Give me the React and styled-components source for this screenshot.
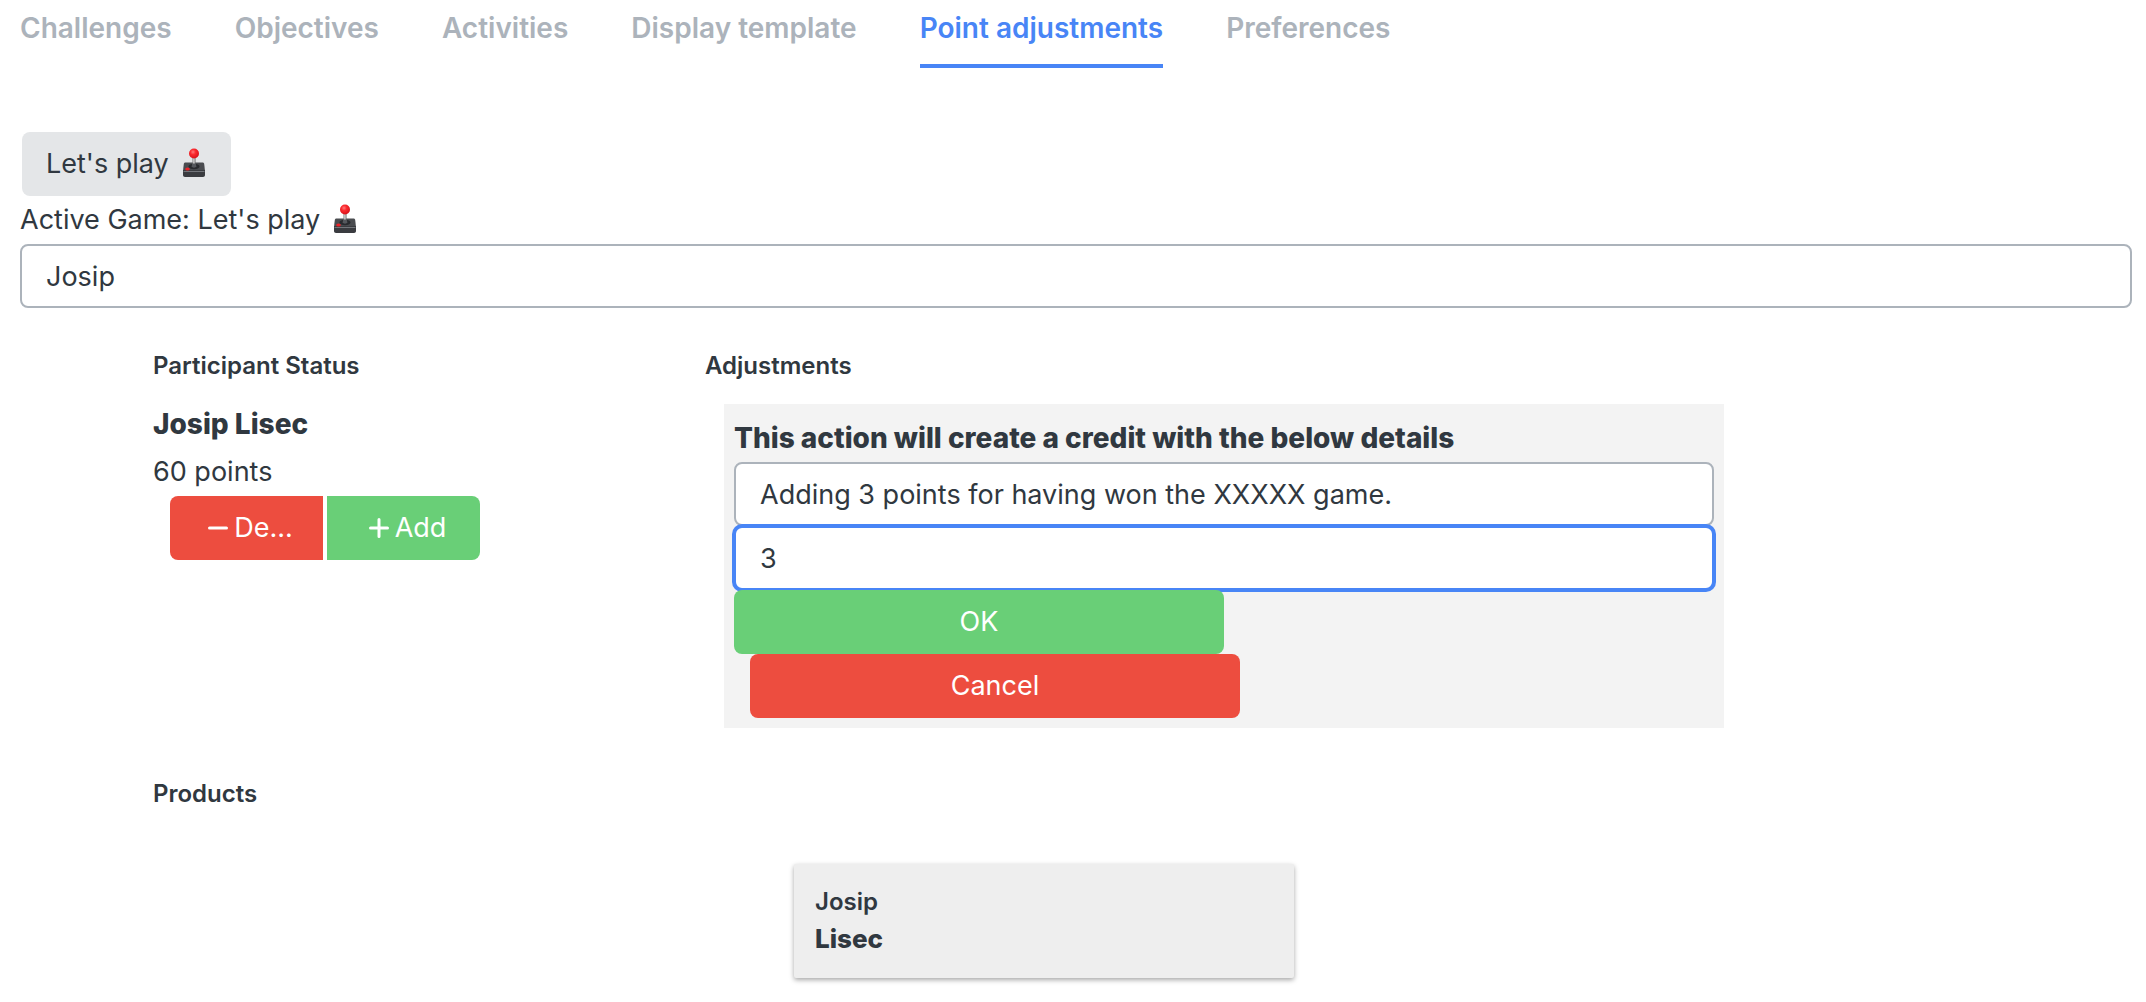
import { useState } from 'react';
import styled, { createGlobalStyle } from 'styled-components';

const GlobalStyle = createGlobalStyle`
  * {
    box-sizing: border-box;
  }
  body {
    margin: 0;
    background: #fff;
    color: #303840;
    font-family: Inter, 'Liberation Sans', sans-serif;
    font-size: 27px;
    line-height: 48px;
  }
  h2, h3, p {
    margin: 0;
  }
`;

const Page = styled.main`
  padding: 0 14px 24px 20px;
`;

const TabList = styled.nav`
  display: flex;
  gap: 63px;
  height: 68px;
  margin-bottom: 64px;
`;

const Tab = styled.a`
  padding-top: 4px;
  border-bottom: 4px solid ${({ $active }) => ($active ? '#4885f6' : 'transparent')};
  color: ${({ $active }) => ($active ? '#4885f6' : '#acb3bb')};
  font-size: 28px;
  font-weight: 600;
  text-decoration: none;
`;

const Button = styled.button`
  display: flex;
  justify-content: center;
  align-items: center;
  gap: 6px;
  height: 64px;
  padding: 0 24px;
  border: 0;
  border-radius: 8px;
  background: ${({ $color }) => $color};
  color: #fff;
  font: inherit;
  cursor: pointer;
`;

const GameButton = styled(Button)`
  gap: 12px;
  margin-left: 2px;
  color: inherit;
`;

const ActiveGame = styled.p`
  display: flex;
  align-items: center;
  gap: 12px;
`;

const Joystick = styled.svg`
  width: 26px;
  height: 30px;
  margin-bottom: 2px;
`;

const Field = styled.input`
  display: block;
  width: 100%;
  height: 64px;
  padding: 0 24px;
  border: 2px solid ${({ $focused }) => ($focused ? '#4885f6' : '#acb3bb')};
  border-radius: 8px;
  outline: none;
  box-shadow: ${({ $focused }) => ($focused ? '0 0 0 2px #4885f6' : 'none')};
  background: #fff;
  color: inherit;
  font: inherit;
`;

const Details = styled.div`
  display: grid;
  grid-template-columns: 3fr 7fr;
  margin: 34px 139px 0 133px;
`;

const SectionTitle = styled.h2`
  margin-bottom: 10px;
  font-size: 24px;
  font-weight: 600;
`;

const Name = styled.h3`
  font-size: 28px;
  font-weight: 800;
`;

const ButtonGroup = styled.div`
  display: flex;
  gap: 4px;
  width: 310px;
  margin-left: 17px;
  button {
    flex: 1;
    padding: 0 20px 0 28px;
  }
  button:first-child {
    border-radius: 8px 0 0 8px;
  }
  button:last-child {
    border-radius: 0 8px 8px 0;
  }
`;

const Sign = styled.svg`
  width: 20px;
  height: 20px;
  fill: none;
  stroke: currentColor;
  stroke-width: 3;
  stroke-linecap: round;
`;

const CreditPanel = styled.form`
  max-width: 1000px;
  margin: 14px 0 0 19px;
  padding: 10px;
  background: #f3f3f3;
`;

const WideButton = styled(Button)`
  position: relative;
  width: 50%;
`;

const CancelButton = styled(WideButton)`
  margin-left: 16px;
`;

const Products = styled.section`
  margin: 42px 139px 0 133px;
`;

const ProductCard = styled.div`
  width: 500px;
  margin: 46px 0 0 641px;
  padding: 19px 21px 21px;
  border-radius: 2px;
  background: #eee;
  box-shadow: 0 2px 5px rgba(0, 0, 0, 0.35);
  line-height: 37px;
`;

const FirstName = styled.p`
  font-size: 24px;
  font-weight: 600;
`;

const LastName = styled.p`
  font-size: 26px;
  font-weight: 800;
`;

const GREEN = '#69cf77';
const RED = '#ed4d3f';

const tabs = ['Challenges', 'Objectives', 'Activities', 'Display template', 'Point adjustments', 'Preferences'];

const JoystickIcon = () => (
  <Joystick viewBox='0 0 26 30' aria-hidden='true'>
    <defs>
      <radialGradient id='ball' cx='0.4' cy='0.35' r='0.65'>
        <stop offset='0' stopColor='#ff7a7a' />
        <stop offset='0.4' stopColor='#fb2b2f' />
        <stop offset='1' stopColor='#d9131b' />
      </radialGradient>
      <linearGradient id='stick'>
        <stop offset='0' stopColor='#777' />
        <stop offset='0.45' stopColor='#ddd' />
        <stop offset='1' stopColor='#666' />
      </linearGradient>
    </defs>
    <path d='M4.500 14.500h17c1 0 1.500.5 1.700 1.500L24 23H2l.8-7C3 15 3.500 14.500 4.500 14.500z' fill='#4a4c50' />
    <path d='M2 22h22v5c0 1.200-.8 2-2 2H4c-1.200 0-2-.8-2-2z' fill='#3a3c40' />
    <path d='M2.500 23.500h21' stroke='#73767b' strokeWidth='1' />
    <ellipse cx='13' cy='18.500' rx='5.500' ry='2.700' fill='#292b2f' />
    <path d='M11.500 9h3v9c0 1-3 1-3 0z' fill='url(#stick)' />
    <path d='M10.500 18.500l1-3h3l1 3c-1 1.500-4 1.500-5 0z' fill='#55585d' />
    <ellipse cx='6.500' cy='21' rx='2.300' ry='1.600' fill='#ed2228' />
    <circle cx='13' cy='5.500' r='5' fill='url(#ball)' />
  </Joystick>
);

const App = () => {
  const [search, setSearch] = useState('Josip');
  const [description, setDescription] = useState('Adding 3 points for having won the XXXXX game.');
  const [points, setPoints] = useState('3');

  return (
    <>
      <GlobalStyle />
      <Page>
        <TabList>
          {tabs.map((tab) => (
            <Tab key={tab} href='#' $active={tab === 'Point adjustments'}>
              {tab}
            </Tab>
          ))}
        </TabList>
        <GameButton type='button' $color='#e4e6e8'>
          Let's play <JoystickIcon />
        </GameButton>
        <ActiveGame>
          Active Game: Let's play <JoystickIcon />
        </ActiveGame>
        <Field aria-label='Participant' value={search} onChange={(e) => setSearch(e.target.value)} />

        <Details>
          <section>
            <SectionTitle>Participant Status</SectionTitle>
            <Name>Josip Lisec</Name>
            <p>60 points</p>
            <ButtonGroup>
              <Button type='button' $color={RED}>
                <Sign viewBox='0 0 20 20'>
                  <path d='M1.500 10h17' />
                </Sign>
                De...
              </Button>
              <Button type='button' $color={GREEN}>
                <Sign viewBox='0 0 20 20'>
                  <path d='M1.500 10h17M10 1.500v17' />
                </Sign>
                Add
              </Button>
            </ButtonGroup>
          </section>
          <section>
            <SectionTitle>Adjustments</SectionTitle>
            <CreditPanel onSubmit={(e) => e.preventDefault()}>
              <Name>This action will create a credit with the below details</Name>
              <Field aria-label='Description' value={description} onChange={(e) => setDescription(e.target.value)} />
              <Field aria-label='Points' $focused value={points} onChange={(e) => setPoints(e.target.value)} />
              <WideButton $color={GREEN}>OK</WideButton>
              <CancelButton type='button' $color={RED}>
                Cancel
              </CancelButton>
            </CreditPanel>
          </section>
        </Details>

        <Products>
          <SectionTitle>Products</SectionTitle>
          <ProductCard>
            <FirstName>Josip</FirstName>
            <LastName>Lisec</LastName>
          </ProductCard>
        </Products>
      </Page>
    </>
  );
};

export default App;
